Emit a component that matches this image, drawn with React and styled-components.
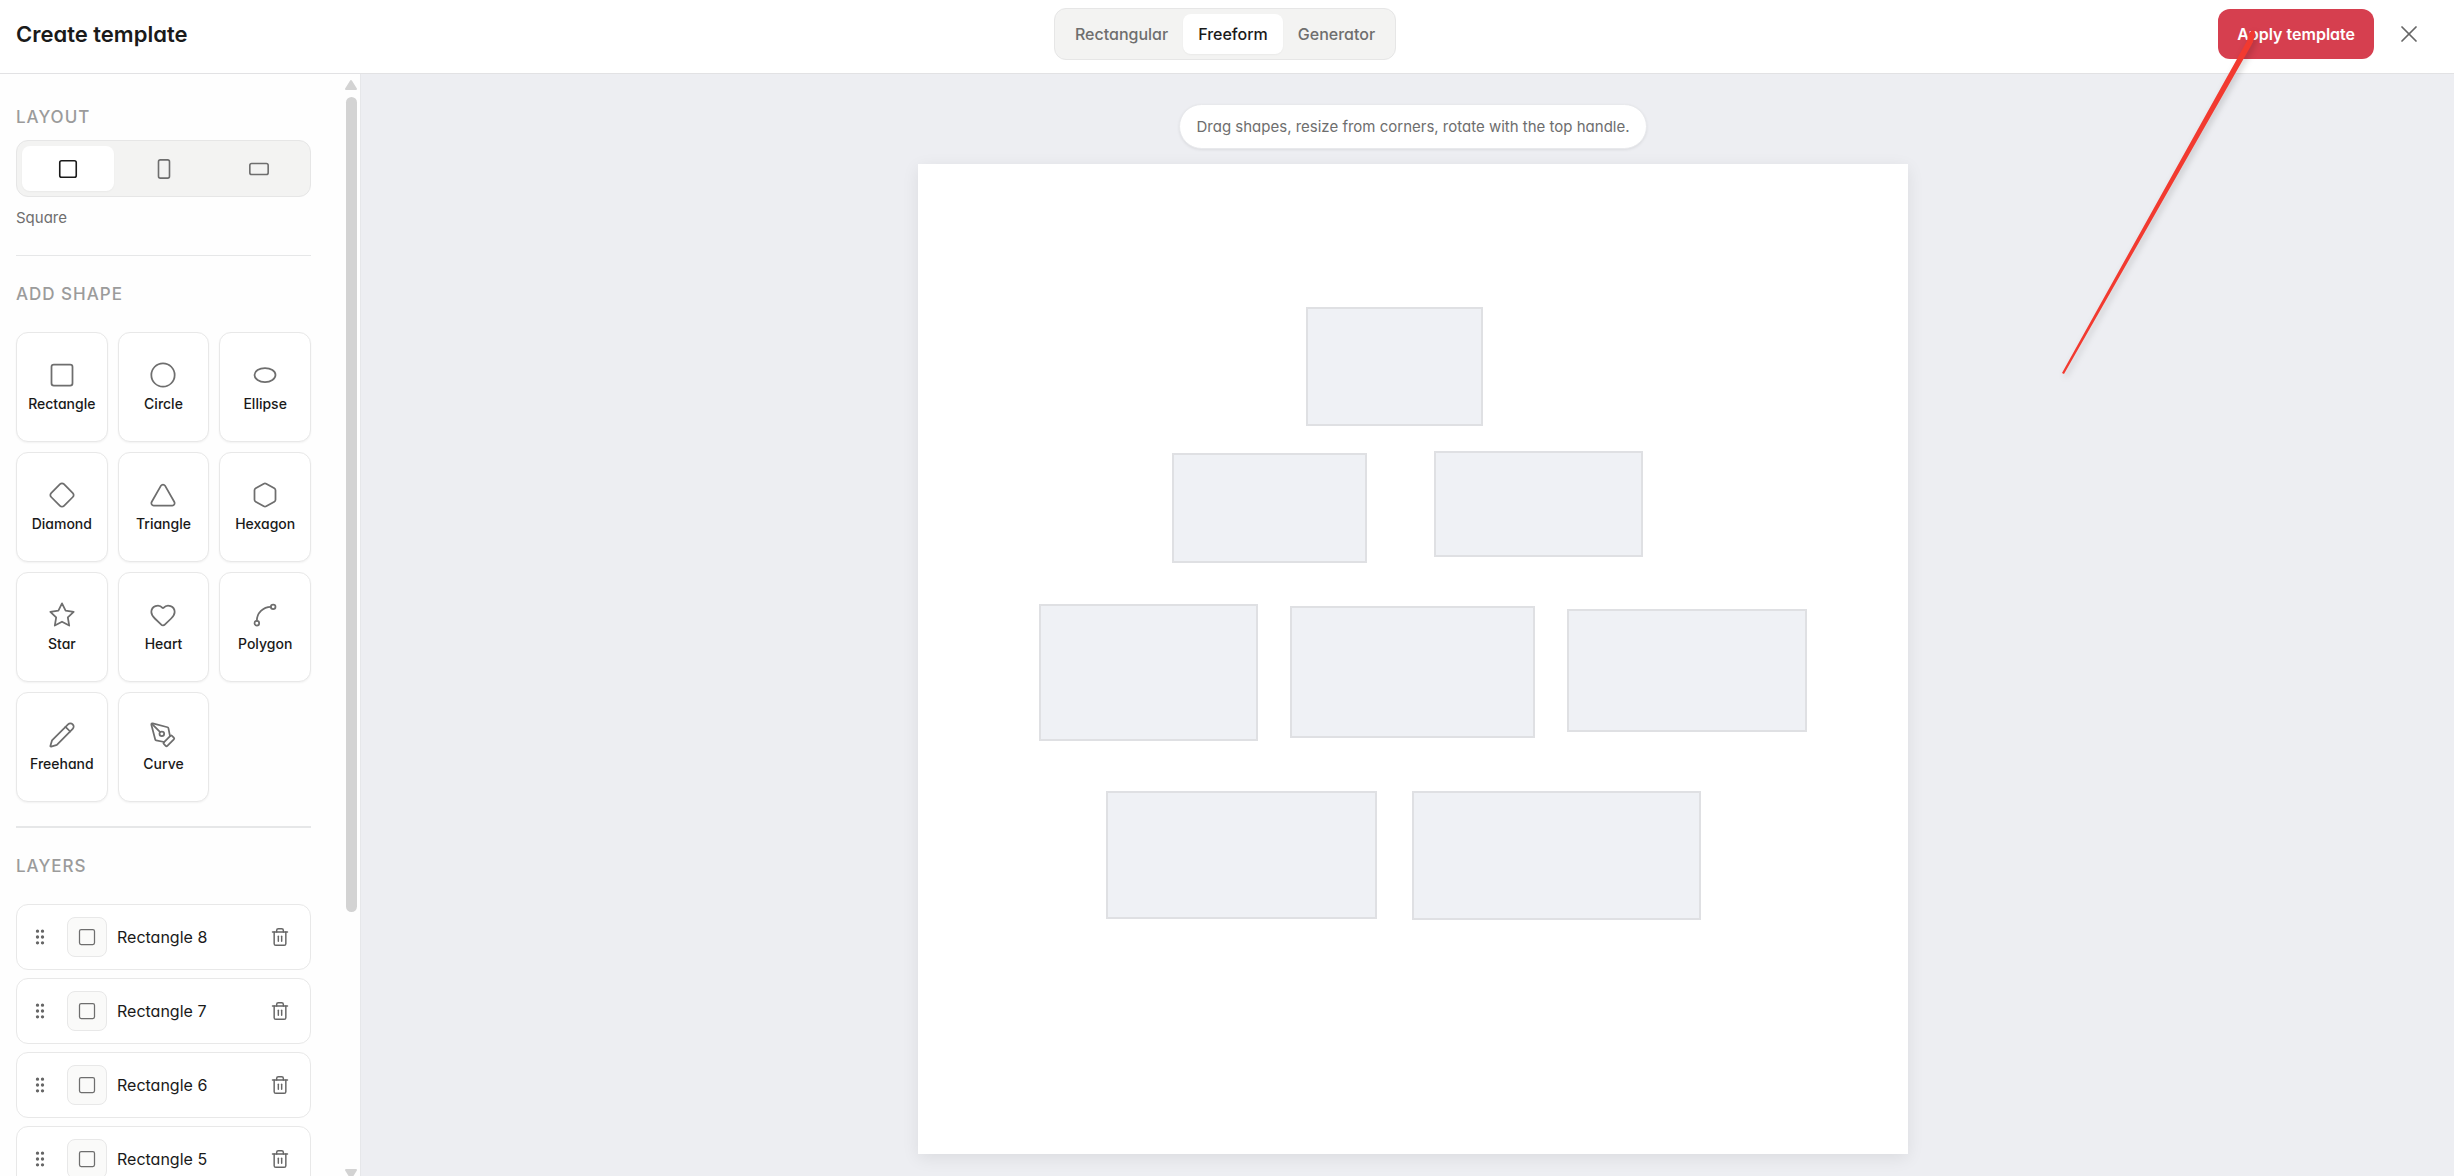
import React, { useState } from "react";
import styled, { createGlobalStyle } from "styled-components";
import {
  Square,
  RectangleVertical,
  RectangleHorizontal,
  Circle,
  Diamond,
  Triangle,
  Hexagon,
  Heart,
  Spline,
  Pencil,
  PenTool,
  GripVertical,
  Trash2,
  X,
} from "lucide-react";

const GlobalStyle = createGlobalStyle`
  *, *::before, *::after { box-sizing: border-box; }
  body {
    margin: 0;
    font-family: Inter, "Liberation Sans", sans-serif;
    font-feature-settings: "cv11";
    color: #1a1a1a;
    background: #ffffff;
  }
  button { font: inherit; font-feature-settings: inherit; color: inherit; margin: 0; padding: 0; cursor: pointer; }
  h1, h2, p, ul { margin: 0; padding: 0; }
  ul { list-style: none; }
`;

const Page = styled.div`
  position: relative;
  display: flex;
  flex-direction: column;
  height: 100vh;
  overflow: hidden;
`;

const Header = styled.header`
  display: grid;
  grid-template-columns: 1fr auto 1fr;
  align-items: center;
  flex: none;
  height: 74px;
  padding: 0 20px 6px 16px;
  border-bottom: 1px solid #e2e2e4;
`;

const Title = styled.h1`
  font-size: 22px;
  line-height: 28px;
  font-weight: 600;
`;

const Segmented = styled.div`
  display: flex;
  gap: ${(p) => p.$gap || 0}px;
  padding: 5px;
  border: 1px solid #e6e6e6;
  border-radius: 12px;
  background: #f3f3f2;
`;

const Segment = styled.button`
  display: flex;
  flex: ${(p) => (p.$stretch ? "1" : "none")};
  align-items: center;
  justify-content: center;
  height: ${(p) => (p.$stretch ? "45px" : "40px")};
  padding: 0 15px;
  border: 0;
  border-radius: 8px;
  font-size: 16px;
  font-weight: 500;
  color: ${(p) => (p.$active ? "#1a1a1a" : "#6e6e6e")};
  background: ${(p) => (p.$active ? "#ffffff" : "transparent")};
  box-shadow: ${(p) => (p.$active ? "0 1px 2px rgba(0, 0, 0, 0.04)" : "none")};
`;

const HeaderActions = styled.div`
  display: flex;
  align-items: center;
  justify-content: flex-end;
  gap: 10px;
`;

const ApplyButton = styled.button`
  height: 50px;
  padding: 0 19px;
  border: 0;
  border-radius: 12px;
  font-size: 16px;
  font-weight: 600;
  color: #ffffff;
  background: #d63f4f;
`;

const IconButton = styled.button`
  display: grid;
  place-items: center;
  border: 0;
  color: #666666;
  background: none;
`;

const CloseButton = styled(IconButton)`
  width: 50px;
  height: 50px;
`;

const Body = styled.div`
  display: flex;
  flex: 1;
  min-height: 0;
`;

const Sidebar = styled.aside`
  display: flex;
  flex: none;
  width: 361px;
  border-right: 1px solid #e6e7ea;
  background: #fefefe;
`;

const SidebarContent = styled.div`
  flex: 1;
  overflow: hidden;
  padding: 31px 33px 0 16px;
`;

const Scrollbar = styled.div`
  display: flex;
  flex-direction: column;
  align-items: center;
  justify-content: space-between;
  width: 16px;
  padding: 5px 2px 0 0;
`;

const ScrollTrack = styled.div`
  flex: 1;
  width: 11px;
  margin: 7px 0;
`;

const ScrollThumb = styled.div`
  height: 76.5%;
  border-radius: 6px;
  background: #d3d3d3;
`;

const Section = styled.section`
  padding-bottom: ${(p) => p.$bottom}px;
  margin-bottom: 26px;
  border-bottom: ${(p) => p.$rule}px solid #e6e7e8;
`;

const SectionTitle = styled.h2`
  margin-bottom: ${(p) => p.$gap}px;
  font-size: 17px;
  line-height: 24px;
  font-weight: 500;
  letter-spacing: 1px;
  text-transform: uppercase;
  color: #9b9b9b;
`;

const LayoutName = styled.p`
  margin-top: 11px;
  font-size: 15px;
  line-height: 20px;
  color: #6e6e6e;
`;

const ShapeGrid = styled.div`
  display: grid;
  grid-template-columns: repeat(3, 1fr);
  gap: 10px;
`;

const ShapeCard = styled.button`
  display: flex;
  flex-direction: column;
  align-items: center;
  justify-content: center;
  gap: 6px;
  height: 110px;
  border: 1px solid #e8e8e8;
  border-radius: 12px;
  font-size: 14px;
  line-height: 18px;
  font-weight: 500;
  background: #ffffff;
  box-shadow: 0 1px 2px rgba(0, 0, 0, 0.05);

  svg { color: #6e6e6e; }
`;

const LayerList = styled.ul`
  display: flex;
  flex-direction: column;
  gap: 8px;
`;

const LayerRow = styled.li`
  display: flex;
  align-items: center;
  height: 66px;
  padding: 0 12px;
  border: 1px solid #e8e8e8;
  border-radius: 12px;
  background: #ffffff;
`;

const Grip = styled(IconButton)`
  width: 22px;
  height: 40px;
`;

const LayerThumb = styled.span`
  display: grid;
  place-items: center;
  width: 40px;
  height: 40px;
  margin: 0 10px 0 16px;
  border: 1px solid #e8e8e8;
  border-radius: 8px;
  color: #6e6e6e;
  background: #fafaf9;
`;

const LayerName = styled.span`
  flex: 1;
  font-size: 16px;
  line-height: 20px;
`;

const DeleteButton = styled(IconButton)`
  width: 36px;
  height: 36px;
`;

const Workspace = styled.main`
  display: flex;
  flex: 1;
  flex-direction: column;
  align-items: center;
  gap: 15px;
  min-width: 0;
  padding: 30px 0 22px 11px;
  background: #edeef2;
`;

const Hint = styled.p`
  padding: 11px 16px;
  border: 1px solid #e8e9ec;
  border-radius: 23px;
  font-size: 15px;
  line-height: 21px;
  color: #6e6e6e;
  background: #ffffff;
  box-shadow: 0 1px 3px rgba(0, 0, 0, 0.08);
`;

const Canvas = styled.div`
  position: relative;
  flex: 1;
  min-height: 0;
  aspect-ratio: 1;
  background: #ffffff;
  box-shadow: 0 4px 16px rgba(0, 0, 0, 0.08);
`;

const CanvasShape = styled.div`
  position: absolute;
  border: 2px solid #dfe0e3;
  background: #eff1f5;
`;

const Pointer = styled.svg`
  position: absolute;
  top: 0;
  right: 180px;
  filter: drop-shadow(2px 3px 3px rgba(0, 0, 0, 0.18));
  pointer-events: none;
`;

function Ellipse({ size }) {
  return (
    <svg width={size} height={size} viewBox="0 0 24 24" fill="none" stroke="currentColor" strokeWidth="1.5">
      <ellipse cx="12" cy="12" rx="9" ry="6" />
    </svg>
  );
}

function Star({ size }) {
  return (
    <svg width={size} height={size} viewBox="0 0 24 24" fill="none" stroke="currentColor" strokeWidth="1.5" strokeLinejoin="round">
      <path d="M12 2l3.09 6.26L22 9.27l-5 4.87 1.18 6.88L12 17.77l-6.18 3.25L7 14.14 2 9.27l6.91-1.01z" />
    </svg>
  );
}

const MODES = ["Rectangular", "Freeform", "Generator"];

const LAYOUTS = [
  { name: "Square", Icon: Square },
  { name: "Portrait", Icon: RectangleVertical },
  { name: "Landscape", Icon: RectangleHorizontal },
];

const SHAPES = [
  ["Rectangle", Square],
  ["Circle", Circle],
  ["Ellipse", Ellipse],
  ["Diamond", Diamond],
  ["Triangle", Triangle],
  ["Hexagon", Hexagon],
  ["Star", Star],
  ["Heart", Heart],
  ["Polygon", Spline],
  ["Freehand", Pencil],
  ["Curve", PenTool],
];

const LAYERS = ["Rectangle 8", "Rectangle 7", "Rectangle 6", "Rectangle 5"];

// Shape frames in canvas units; the canvas is a 990-unit square.
const CANVAS_UNITS = 990;
const FRAMES = [
  [388, 143, 177, 119],
  [254, 289, 195, 110],
  [516, 287, 209, 106],
  [121, 440, 219, 137],
  [372, 442, 245, 132],
  [649, 445, 240, 123],
  [188, 627, 271, 128],
  [494, 627, 289, 129],
];

const percent = (v) => `${(v / CANVAS_UNITS) * 100}%`;

export default function App() {
  const [mode, setMode] = useState("Freeform");
  const [layout, setLayout] = useState("Square");

  return (
    <Page>
      <GlobalStyle />
      <Header>
        <Title>Create template</Title>
        <Segmented>
          {MODES.map((m) => (
            <Segment key={m} $active={m === mode} onClick={() => setMode(m)}>
              {m}
            </Segment>
          ))}
        </Segmented>
        <HeaderActions>
          <ApplyButton>Apply template</ApplyButton>
          <CloseButton aria-label="Close">
            <X size={28} strokeWidth={1.5} />
          </CloseButton>
        </HeaderActions>
      </Header>

      <Body>
        <Sidebar>
          <SidebarContent>
            <Section $bottom={27} $rule={1}>
              <SectionTitle $gap={11}>Layout</SectionTitle>
              <Segmented $gap={4}>
                {LAYOUTS.map(({ name, Icon }) => (
                  <Segment key={name} $stretch $active={name === layout} aria-label={name} onClick={() => setLayout(name)}>
                    <Icon size={22} strokeWidth={1.75} />
                  </Segment>
                ))}
              </Segmented>
              <LayoutName>{layout}</LayoutName>
            </Section>

            <Section $bottom={24} $rule={2}>
              <SectionTitle $gap={26}>Add shape</SectionTitle>
              <ShapeGrid>
                {SHAPES.map(([name, Icon]) => (
                  <ShapeCard key={name}>
                    <Icon size={28} strokeWidth={1.5} />
                    {name}
                  </ShapeCard>
                ))}
              </ShapeGrid>
            </Section>

            <SectionTitle $gap={26}>Layers</SectionTitle>
            <LayerList>
              {LAYERS.map((name) => (
                <LayerRow key={name}>
                  <Grip aria-label={`Move ${name}`}>
                    <GripVertical size={20} strokeWidth={2} />
                  </Grip>
                  <LayerThumb>
                    <Square size={20} strokeWidth={1.5} />
                  </LayerThumb>
                  <LayerName>{name}</LayerName>
                  <DeleteButton aria-label={`Delete ${name}`}>
                    <Trash2 size={20} strokeWidth={1.75} />
                  </DeleteButton>
                </LayerRow>
              ))}
            </LayerList>
          </SidebarContent>
          <Scrollbar aria-hidden="true">
            <svg width="12" height="11" viewBox="0 0 12 11" fill="#d3d3d3" stroke="#d3d3d3" strokeWidth="2" strokeLinejoin="round">
              <path d="M6 2l5 8H1z" />
            </svg>
            <ScrollTrack>
              <ScrollThumb />
            </ScrollTrack>
            <svg width="12" height="7" viewBox="0 0 12 7" fill="#d3d3d3" stroke="#d3d3d3" strokeWidth="2" strokeLinejoin="round">
              <path d="M1 1h10L6 9z" />
            </svg>
          </Scrollbar>
        </Sidebar>

        <Workspace>
          <Hint>Drag shapes, resize from corners, rotate with the top handle.</Hint>
          <Canvas>
            {FRAMES.map(([x, y, w, h], i) => (
              <CanvasShape
                key={i}
                style={{ left: percent(x), top: percent(y), width: percent(w), height: percent(h) }}
              />
            ))}
          </Canvas>
        </Workspace>
      </Body>

      <Pointer width="224" height="390" viewBox="0 0 224 390" aria-hidden="true">
        <path d="M12 373L197 41Q198 34 201 31Q205 29 205 33Q205 38 202 44L14 374Z" fill="#f23a30" />
      </Pointer>
    </Page>
  );
}
